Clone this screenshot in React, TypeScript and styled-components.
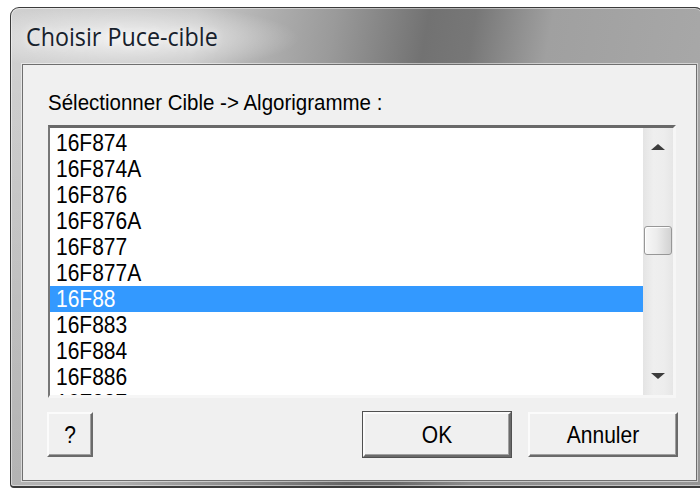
import React from 'react';
import styled, { createGlobalStyle } from 'styled-components';

const chips = [
  '16F874',
  '16F874A',
  '16F876',
  '16F876A',
  '16F877',
  '16F877A',
  '16F88',
  '16F883',
  '16F884',
  '16F886',
  '16F887',
];

const selected = '16F88';
const thumbOffset = 60;

const GlobalStyle = createGlobalStyle`
  html, body {
    margin: 0;
    padding: 0;
    background: #fff;
    overflow: hidden;
  }
  body {
    font-family: "Liberation Sans", Arial, sans-serif;
    color: #000;
  }
`;

const Screen = styled.div`
  width: 700px;
  height: 489px;
  box-sizing: border-box;
  padding: 7px 0 0 10px;
  overflow: hidden;
`;

const Window = styled.div`
  width: 694px;
  height: 481px;
  box-sizing: border-box;
  display: flex;
  flex-direction: column;
  padding: 0 6px 5px 11px;
  border: 1px solid #3b3b3b;
  border-bottom-width: 2px;
  border-radius: 9px 9px 4px 4px;
  box-shadow: inset 0 0 0 1px rgba(255, 255, 255, 0.45);
  background:
    radial-gradient(ellipse 170px 34px at 118px 30px, rgba(255, 255, 255, 0.75), rgba(255, 255, 255, 0) 100%),
    linear-gradient(to bottom, rgba(0, 0, 0, 0) 60px, rgba(0, 0, 0, 0.12) 100%),
    linear-gradient(100deg, #d0d0d0 0%, #c6c6c6 24%, #9a9a9a 42%, #727272 54%, #777777 60%, #a0a0a0 70%, #ababab 100%);
`;

const TitleBar = styled.div`
  height: 56px;
  flex: none;
  display: flex;
  align-items: center;
  margin-left: -11px;
  padding-left: 15px;
`;

const Title = styled.span`
  display: inline-block;
  font-family: "Open Sans", "Noto Sans", sans-serif;
  font-size: 23.3px;
  color: #17212c;
  transform: scaleY(1.08);
  text-shadow: 0 0 8px rgba(255, 255, 255, 0.9);
`;

const Client = styled.div`
  flex: 1;
  display: flex;
  flex-direction: column;
  padding: 25px 18px 0 25px;
  background: #f0f0f0;
  border: 1px solid #6f6f6f;
  box-shadow: 0 0 0 1px rgba(255, 255, 255, 0.5);
`;

const Label = styled.div`
  font-size: 20.5px;
  line-height: 24px;
  margin-bottom: 11px;
  white-space: nowrap;
`;

const Stretch = styled.span`
  display: inline-block;
  transform: scaleY(1.12);
`;

const ListBox = styled.div`
  width: 628px;
  height: 273px;
  box-sizing: border-box;
  display: flex;
  background: #fff;
  border-style: solid;
  border-width: 3px 3px 3px 2px;
  border-color: #696969 #f6f6f6 #f6f6f6 #767676;
`;

const Rows = styled.div`
  flex: 1;
  padding-top: 2px;
  overflow: hidden;
`;

const Row = styled.div<{ $active?: boolean }>`
  height: 26px;
  line-height: 26px;
  padding-left: 6px;
  font-size: 21px;
  white-space: nowrap;
  background: ${p => (p.$active ? '#3399ff' : 'transparent')};
  color: ${p => (p.$active ? '#fff' : '#000')};
`;

const ScrollBar = styled.div`
  width: 30px;
  display: flex;
  flex-direction: column;
  background: linear-gradient(to right, #e4e4e4 0%, #efefef 35%, #ededed 70%, #e6e6e6 100%);
`;

const ArrowButton = styled.div`
  height: 38px;
  flex: none;
  display: flex;
  align-items: center;
  justify-content: center;
`;

const Arrow = styled.div<{ $down?: boolean }>`
  width: 0;
  height: 0;
  border-left: 7px solid transparent;
  border-right: 7px solid transparent;
  ${p =>
    p.$down
      ? 'border-top: 6px solid #3c3c3c;'
      : 'border-bottom: 6px solid #3c3c3c;'}
`;

const Track = styled.div`
  flex: 1;
`;

const Thumb = styled.div`
  width: 28px;
  height: 29px;
  box-sizing: border-box;
  margin-left: 1px;
  border: 1px solid #979797;
  border-radius: 3px;
  background: linear-gradient(to right, #f7f7f7 0%, #ececec 45%, #d2d2d2 100%);
  box-shadow: inset 1px 1px 0 rgba(255, 255, 255, 0.9);
`;

const ButtonRow = styled.div`
  display: flex;
  margin-top: 14px;
  height: 45px;
`;

const Button = styled.div<{ $width: number; $default?: boolean }>`
  width: ${p => p.$width}px;
  height: 45px;
  box-sizing: border-box;
  display: flex;
  align-items: center;
  justify-content: center;
  font-size: 21px;
  background: #f0f0f0;
  border-style: solid;
  border-width: 2px;
  border-color: #fbfbfb #6a6a6a #6a6a6a #fbfbfb;
  box-shadow: inset -1px -1px 0 #a0a0a0
    ${p => (p.$default ? ', 0 0 0 1px #505050' : '')};
`;

const Spacer = styled.div`
  flex: 1;
`;

export default function App() {
  return (
    <>
      <GlobalStyle />
      <Screen>
        <Window>
          <TitleBar>
            <Title>Choisir Puce-cible</Title>
          </TitleBar>
          <Client>
            <Label>
              <Stretch>Sélectionner Cible -&gt; Algorigramme :</Stretch>
            </Label>
            <ListBox>
              <Rows>
                {chips.map(chip => (
                  <Row key={chip} $active={chip === selected}>
                    <Stretch>{chip}</Stretch>
                  </Row>
                ))}
              </Rows>
              <ScrollBar>
                <ArrowButton>
                  <Arrow />
                </ArrowButton>
                <Track>
                  <Thumb style={{ marginTop: thumbOffset }} />
                </Track>
                <ArrowButton>
                  <Arrow $down />
                </ArrowButton>
              </ScrollBar>
            </ListBox>
            <ButtonRow>
              <Button $width={46} style={{ marginLeft: -1 }}>
                <Stretch>?</Stretch>
              </Button>
              <Spacer />
              <Button $width={148} $default style={{ marginRight: 17 }}>
                <Stretch>OK</Stretch>
              </Button>
              <Button $width={150}>
                <Stretch>Annuler</Stretch>
              </Button>
            </ButtonRow>
          </Client>
        </Window>
      </Screen>
    </>
  );
}
